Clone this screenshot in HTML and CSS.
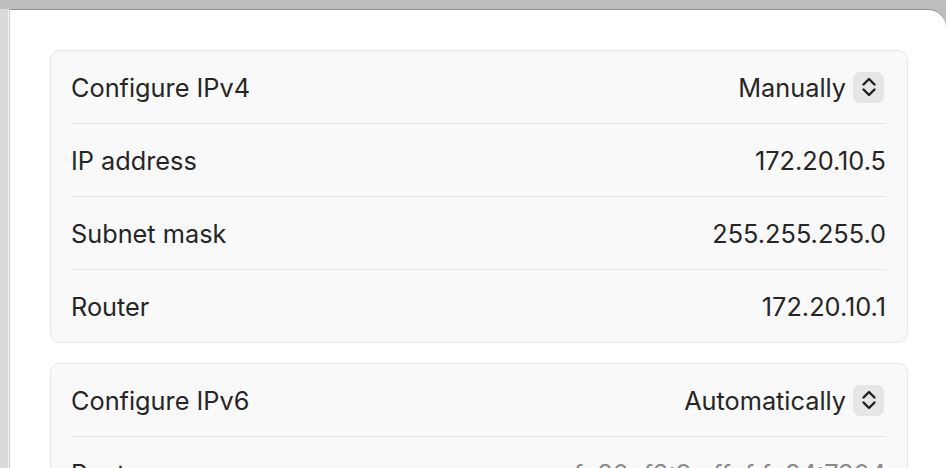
FILE: index.html
```html
<!DOCTYPE html>
<html>
<head>
<meta charset="utf-8">
<link rel="stylesheet" href="styles.css">
</head>
<body>
<div class="shell">
  <div class="topbar"></div>
  <div class="main">
    <div class="strip"></div>
    <div class="window">
      <section class="card">
        <div class="row">
          <span class="label">Configure IPv4</span>
          <span class="value">Manually
            <span class="stepper"><svg width="16" height="22" viewBox="0 0 16 22"><path d="M2.5 8.5 L8 3 L13.5 8.5 M2.5 13.5 L8 19 L13.5 13.5" fill="none" stroke="#1f1f1f" stroke-width="2.4" stroke-linecap="round" stroke-linejoin="round"/></svg></span>
          </span>
        </div>
        <div class="sep"></div>
        <div class="row">
          <span class="label">IP address</span>
          <span class="value">172.20.10.5</span>
        </div>
        <div class="sep"></div>
        <div class="row">
          <span class="label">Subnet mask</span>
          <span class="value">255.255.255.0</span>
        </div>
        <div class="sep"></div>
        <div class="row">
          <span class="label">Router</span>
          <span class="value">172.20.10.1</span>
        </div>
      </section>
      <section class="card">
        <div class="row">
          <span class="label">Configure IPv6</span>
          <span class="value">Automatically
            <span class="stepper"><svg width="16" height="22" viewBox="0 0 16 22"><path d="M2.5 8.5 L8 3 L13.5 8.5 M2.5 13.5 L8 19 L13.5 13.5" fill="none" stroke="#1f1f1f" stroke-width="2.4" stroke-linecap="round" stroke-linejoin="round"/></svg></span>
          </span>
        </div>
        <div class="sep"></div>
        <div class="row">
          <span class="label">Router</span>
          <span class="value muted">fe80::f8:9c:ffef:fe84:7304</span>
        </div>
      </section>
    </div>
  </div>
</div>
</body>
</html>
```
FILE: styles.css
```css
html, body {
  margin: 0;
  padding: 0;
  height: 100%;
  overflow: hidden;
}
body {
  font-family: Inter, "Noto Sans", "Liberation Sans", sans-serif;
  background: #bdbdbd;
}
.shell {
  display: flex;
  flex-direction: column;
  height: 100vh;
}
.topbar {
  height: 9px;
  flex: none;
  background: #bebebe;
}
.main {
  flex: 1;
  display: flex;
  min-height: 0;
}
.strip {
  width: 8px;
  flex: none;
  background: #dadada;
  border-right: 1px solid #f2f2f2;
}
.window {
  flex: 1;
  background: #ffffff;
  border-top: 1px solid #8c8c8c;
  border-left: 1px solid #cfcfcf;
  border-top-right-radius: 18px;
  padding: 40px 38px 0 40px;
  display: flex;
  flex-direction: column;
  gap: 20px;
  overflow: hidden;
}
.card {
  background: #f9f9f9;
  border: 1px solid #e6e6e6;
  border-radius: 10px;
  padding: 0 21px 0 20px;
  flex: none;
}
.row {
  height: 72px;
  display: flex;
  align-items: center;
  justify-content: space-between;
  font-size: 25.3px;
  color: #262626;
}
.value {
  display: flex;
  align-items: center;
  gap: 7px;
  color: #262626;
}
.value.muted {
  color: #8a8a8a;
}
.sep {
  height: 1px;
  background: #e5e5e5;
}
.stepper {
  width: 31px;
  height: 31px;
  border-radius: 7px;
  background: #e6e6e6;
  display: flex;
  align-items: center;
  justify-content: center;
  margin-right: 2px;
}
.stepper svg {
  display: block;
}
```
